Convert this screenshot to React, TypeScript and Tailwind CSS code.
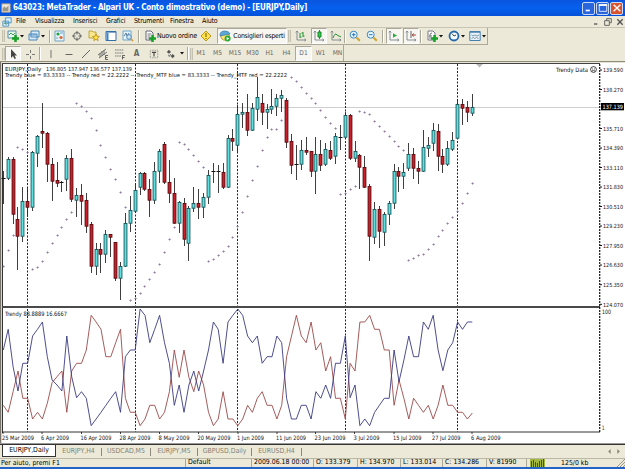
import React from "react";

type Candle = [number, number, number, number, string];

// high, body top, body bottom, low, direction (u = up, d = down, n = doji)
const candles: Candle[] = [
  [171, 178, 179, 204, "n"], [157, 159, 178, 180, "u"], [157, 159, 214, 224, "d"], [207, 219, 236, 270, "d"],
  [187, 201, 236, 242, "u"], [187, 201, 207, 217, "d"], [151, 152, 207, 211, "u"], [135, 136, 153, 167, "u"],
  [103, 131, 133, 148, "d"], [132, 133, 164, 182, "d"], [158, 164, 181, 201, "d"], [162, 180, 183, 187, "d"],
  [181, 182, 183, 192, "n"], [155, 158, 179, 191, "u"], [149, 158, 199, 202, "d"], [188, 195, 200, 217, "u"],
  [184, 195, 201, 225, "d"], [193, 200, 226, 233, "d"], [222, 224, 266, 273, "d"], [243, 249, 266, 275, "u"],
  [243, 249, 254, 273, "d"], [230, 234, 254, 263, "u"], [234, 234, 237, 257, "d"], [242, 242, 278, 281, "d"],
  [262, 266, 278, 300, "u"], [213, 223, 266, 267, "u"], [196, 210, 223, 232, "u"], [183, 190, 211, 212, "u"],
  [172, 173, 187, 195, "u"], [172, 173, 189, 191, "d"], [179, 189, 200, 217, "d"], [162, 171, 200, 204, "u"],
  [149, 151, 171, 183, "u"], [142, 144, 182, 184, "d"], [160, 182, 193, 203, "d"], [178, 193, 223, 224, "d"],
  [201, 202, 223, 233, "u"], [198, 203, 239, 246, "d"], [206, 208, 243, 261, "u"], [187, 203, 208, 212, "u"],
  [189, 203, 207, 219, "d"], [193, 197, 207, 218, "u"], [170, 175, 197, 204, "u"], [163, 171, 172, 183, "n"],
  [165, 171, 172, 193, "n"], [163, 172, 187, 189, "d"], [135, 138, 187, 188, "u"], [129, 138, 141, 151, "d"],
  [105, 114, 145, 153, "u"], [103, 112, 114, 128, "u"], [94, 112, 130, 136, "d"], [103, 108, 130, 131, "u"],
  [77, 97, 109, 121, "u"], [94, 103, 112, 125, "d"], [104, 109, 112, 129, "u"], [89, 106, 109, 114, "u"],
  [94, 98, 106, 116, "u"], [90, 95, 98, 112, "u"], [98, 100, 142, 148, "d"], [134, 141, 165, 174, "d"],
  [145, 164, 165, 180, "n"], [140, 150, 164, 170, "u"], [137, 150, 152, 155, "d"], [151, 151, 171, 177, "d"],
  [137, 154, 171, 194, "u"], [140, 154, 165, 171, "d"], [143, 149, 164, 166, "u"], [141, 150, 158, 160, "d"],
  [133, 136, 156, 164, "u"], [125, 137, 138, 150, "n"], [112, 115, 137, 139, "u"], [114, 115, 158, 160, "d"],
  [141, 151, 158, 162, "u"], [154, 155, 167, 189, "d"], [156, 167, 187, 188, "d"], [184, 186, 236, 261, "d"],
  [202, 209, 237, 244, "u"], [206, 209, 231, 248, "d"], [212, 214, 232, 246, "u"], [201, 203, 214, 225, "u"],
  [164, 171, 203, 209, "u"], [167, 171, 176, 192, "d"], [163, 172, 176, 189, "u"], [143, 154, 168, 171, "u"],
  [148, 154, 168, 179, "d"], [161, 168, 171, 184, "d"], [130, 147, 171, 172, "u"], [137, 145, 148, 157, "u"],
  [123, 130, 143, 151, "u"], [124, 131, 156, 171, "d"], [149, 156, 164, 173, "d"], [141, 148, 164, 166, "u"],
  [132, 140, 149, 151, "u"], [100, 104, 138, 139, "u"], [99, 104, 108, 125, "d"], [101, 107, 112, 122, "d"],
  [94, 107, 113, 116, "u"],
];

// Trend dot height for every bar; 0 leaves the bar without a dot
const dots = [
  266, 250, 235, 147, 149, 152, 269, 267, 261, 252, 243, 235, 227, 219, 212, 103, 106, 111, 118, 130, 145, 157, 169, 179,
  192, 207, 300, 298, 293, 286, 279, 272, 264, 252, 239, 227, 142, 144, 149, 155, 161, 167, 261, 259, 255, 251, 246, 237,
  226, 212, 196, 180, 166, 150, 137, 129, 129, 120, 0, 77, 81, 87, 93, 98, 103, 110, 117, 123, 128, 194, 193, 189, 186,
  111, 112, 114, 121, 126, 131, 136, 141, 146, 150, 260, 258, 255, 254, 249, 244, 236, 230, 223, 217, 211, 203, 193, 183,
];

// Oscillator readings in thirds of a pixel below y = 300
const blue = [
  150, 88, 200, 273, 190, 190, 108, 88, 66, 170, 240, 255, 273, 108, 230, 293, 275, 295, 377, 357, 337, 316, 295, 275, 337,
  170, 150, 150, 27, 46, 128, 88, 46, 128, 190, 316, 255, 337, 255, 213, 273, 213, 150, 66, 88, 190, 66, 46, 27, 46, 108,
  128, 108, 190, 170, 170, 108, 128, 295, 357, 357, 316, 316, 357, 275, 295, 255, 295, 190, 190, 108, 293, 255, 377, 357,
  377, 337, 316, 295, 295, 150, 245, 180, 108, 170, 170, 66, 88, 46, 150, 212, 150, 128, 66, 88, 66, 66,
];
const red = [
  316, 337, 275, 213, 295, 295, 357, 337, 357, 310, 248, 230, 213, 337, 213, 190, 190, 150, 46, 66, 88, 170, 170, 128, 88,
  295, 337, 337, 377, 357, 316, 316, 357, 337, 275, 150, 232, 150, 232, 275, 213, 255, 337, 377, 357, 275, 357, 357, 377,
  357, 316, 337, 295, 275, 316, 316, 357, 316, 170, 108, 46, 108, 128, 66, 150, 128, 213, 170, 295, 295, 357, 190, 213, 66,
  66, 46, 88, 88, 150, 150, 316, 240, 295, 357, 295, 316, 337, 316, 357, 316, 255, 316, 316, 337, 337, 357, 339,
];

const prices = [
  ["139.590", 70], ["138.270", 89.5], ["135.710", 128.5], ["134.390", 148], ["133.110", 167.5], ["131.830", 187],
  ["130.510", 206.5], ["129.230", 226], ["127.950", 245.5], ["126.630", 265], ["125.350", 284.7], ["124.070", 304.3],
] as const;

const dates: [string, number, number][] = [
  ["25 Mar 2009", 2, 32], ["6 Apr 2009", 41, 28], ["16 Apr 2009", 80.5, 31], ["28 Apr 2009", 119.5, 31],
  ["8 May 2009", 158.5, 31], ["20 May 2009", 197.5, 33], ["1 Jun 2009", 237, 27], ["11 Jun 2009", 276, 30],
  ["23 Jun 2009", 314.5, 31], ["3 Jul 2009", 353.5, 26], ["15 Jul 2009", 393, 28.5], ["27 Jul 2009", 432, 28.5],
  ["6 Aug 2009", 471, 29.5],
];

const barX = (i: number) => 3.3 + i * 4.885;
const points = (v: number[]) => v.map((y, i) => `${barX(i).toFixed(1)},${(300 + y / 3).toFixed(1)}`).join(" ");

function Label({ x, y, w, children, fill = "#111", size = 6 }: { x: number; y: number; w: number; children: string; fill?: string; size?: number }) {
  return (
    <text x={x} y={y} textLength={w} lengthAdjust="spacingAndGlyphs" fill={fill} fontSize={size}>
      {children}
    </text>
  );
}

function Chart() {
  return (
    <svg viewBox="0 61 625 383" className="block h-[383px] w-[625px] shrink-0" style={{ fontFamily: '"DejaVu Sans Condensed", "DejaVu Sans", sans-serif' }}>
      <rect x="0" y="61" width="625" height="383" fill="#fff" />
      <rect x="0" y="61" width="625" height="1" fill="#8f8c7c" />
      <rect x="0" y="62" width="625" height="1" fill="#e6e3d5" />
      <rect x="0" y="62" width="1" height="382" fill="#77756b" />
      <rect x="1" y="62" width="1" height="382" fill="#d8d5c8" />
      <rect x="2" y="63" width="1" height="370" fill="#333" />
      <rect x="2" y="63" width="598" height="1" fill="#444" />
      <path d="M3 107.5H600" stroke="#cfcfcf" />
      {[27.5, 135.5, 237.5, 345.5, 457.5].map((x) => (
        <path key={x} d={`M${x} 64V432`} stroke="#222" strokeDasharray="2 1.5" />
      ))}
      <path d="M476 64h7l-3.5 3.5z" fill="#bbb" />
      {dots.map((y, i) =>
        y ? (
          <path key={i} d={`M${Math.floor(barX(i)) - 0.6} ${y + 0.5}h2.4M${Math.floor(barX(i)) + 0.6} ${y - 0.7}v2.4`} stroke="#887398" strokeWidth="0.75" />
        ) : null
      )}
      {candles.map(([h, t, b, l, k], i) => {
        const c = Math.floor(barX(i)) + 0.5;
        return (
          <g key={i}>
            <path d={`M${c} ${h}V${l}`} stroke="#292929" strokeWidth={0.9} />
            {k === "n" ? (
              <path d={`M${c - 2} ${t + 0.5}h4`} stroke="#111" />
            ) : (
              <rect x={c - 1.45} y={t + 0.4} width="2.9" height={Math.max(b - t - 0.2, 1.4)} fill={k === "u" ? "#5de0e0" : "#c81f28"} stroke={k === "u" ? "#114f52" : "#54080c"} strokeWidth="0.85" />
            )}
          </g>
        );
      })}
      <rect x="2" y="306" width="598" height="2" fill="#4a4a4a" />
      <polyline points={points(red)} fill="none" stroke="#9c4a4a" strokeWidth="0.9" />
      <polyline points={points(blue)} fill="none" stroke="#3a3a82" strokeWidth="0.9" />
      <path d="M2 432H600" stroke="#333" />
      <path d="M599.7 64V432" stroke="#111" strokeWidth="1.2" strokeDasharray="2 1" />
      <Label x={5} y={70.8} w={36.5} size={5.4}>EURJPY,Daily</Label>
      <Label x={46} y={70.8} w={86} size={5.4}>136.805 137.947 136.577 137.139</Label>
      <Label x={5} y={77.3} w={282} size={5.4}>Trendy blue = 83.3333 -- Trendy red = 22.2222 -- Trendy_MTF blue = 83.3333 -- Trendy_MTF red = 22.2222</Label>
      <Label x={556} y={72} w={32}>Trendy Data</Label>
      <circle cx="593.5" cy="69.5" r="2.9" fill="none" stroke="#111" strokeWidth="0.8" />
      <path d="M592 69h1m1 0h1M592 71q1.5-1.2 3 0" fill="none" stroke="#111" strokeWidth="0.7" />
      <Label x={5} y={316} w={62}>Trendy 88.8889 16.6667</Label>
      {prices.map(([p, y]) => (
        <g key={p}>
          <path d={`M600 ${y}h2`} stroke="#111" />
          <Label x={603} y={y + 2.2} w={20} size={5.6}>{p}</Label>
        </g>
      ))}
      <rect x="601" y="103" width="23" height="7.3" fill="#000" />
      <Label x={602.5} y={108.9} w={20.5} fill="#fff" size={5.8}>137.139</Label>
      <Label x={602} y={314} w={9}>100</Label>
      <Label x={602} y={430} w={2.5}>1</Label>
      {dates.map(([d, x, w]) => (
        <g key={d}>
          <path d={`M${x + 1} 432v2`} stroke="#111" strokeWidth="0.8" />
          <Label x={x} y={439.5} w={w}>{d}</Label>
        </g>
      ))}
      <rect x="0" y="443" width="625" height="1" fill="#999" />
    </svg>
  );
}

function Icon({ children, className = "size-3" }: { children: React.ReactNode; className?: string }) {
  return (
    <svg viewBox="0 0 12 12" className={`${className} shrink-0`} fill="none" strokeWidth="1">
      {children}
    </svg>
  );
}

const Tri = () => (
  <span className="flex w-[5px] shrink-0 justify-center">
    <svg viewBox="0 0 4 3" className="h-[3px] w-[4px]"><path d="M0 0h4L2 2.5z" fill="#111" /></svg>
  </span>
);
const Sep = ({ className = "" }: { className?: string }) => (
  <span className={`h-[13px] w-[2px] shrink-0 border-r border-l border-r-white border-l-[#aca899] ${className}`} />
);
const Grip = () => <span className="block h-[12px] w-[3px] shrink-0 border-x border-[#c5c1b0] bg-[#dedbcd]" />;
const Slot = ({ className, children }: { className: string; children: React.ReactNode }) => (
  <span className={`flex h-full shrink-0 items-center justify-center ${className}`}>{children}</span>
);
const pressed = "border border-t-[#aca899] border-l-[#aca899] border-r-white border-b-white bg-[#f7f6f0]";
const Plus = () => <path d="M8.5 5v7M5 8.5h7" stroke="#17a129" strokeWidth="2.5" />;
const Axis = () => <path d="M2 1v9h9M.8 2.5 2 1l1.2 1.5M9.5 8.8 11 10l-1.5 1.2" stroke="#7b858d" strokeWidth=".9" />;

function Toolbar() {
  return (
    <div className="flex h-[17px] w-[488px] shrink-0 items-center border-r border-b border-[#aca899]">
      <span className="ml-[2px]"><Grip /></span>
      <Slot className="ml-[1px] w-[13px]"><Icon><path d="M1 1h8v7H1z" fill="#e9f6ef" stroke="#5590aa" /><path d="M2 5l2-2 2 2 2-2" stroke="#3d9c53" /><Plus /></Icon></Slot>
      <Tri />
      <Slot className="ml-[4px] w-[12px]"><Icon><path d="M3 1h8v6H3zM1 4h8v6H1z" fill="#d9ebfa" stroke="#4b86b6" /><path d="M2 5h6" stroke="#5b98cb" /></Icon></Slot>
      <Tri />
      <Sep className="ml-[4px]" />
      <Slot className="w-[17px]"><Icon><path d="M1 1h9v10H1z" fill="#e6f3fc" stroke="#6fa4cb" /><circle cx="4" cy="4" r="1.6" fill="#25a341" /><circle cx="7" cy="7.5" r="1.6" fill="#d56a35" /><path d="M6 3h3M2 8h2" stroke="#6fa4cb" /></Icon></Slot>
      <Slot className="w-[17px]"><Icon><circle cx="6" cy="6" r="3.5" stroke="#666" /><path d="M6 1v3.5M6 7.5V11M1 6h3.5M7.5 6H11" stroke="#666" /></Icon></Slot>
      <Slot className="w-[17px]"><Icon><path d="M1 3V1h3l1 1h3v6H1z" fill="#fae98c" stroke="#b59427" strokeWidth=".8" /><path d="m8 4 1 2.2 2.4.3-1.8 1.6.5 2.5L8 9.3l-2.2 1.3.5-2.5-1.8-1.6L7 6.2z" fill="#ffe348" stroke="#ba8a14" strokeWidth=".8" /></Icon></Slot>
      <Slot className="w-[17px]"><Icon><path d="M1 1.5h10v9H1z" fill="#fff" stroke="#356fa8" /><path d="M1 2h10" stroke="#356fa8" strokeWidth="1.2" /><path d="M2.5 3v7" stroke="#3f86ca" strokeWidth="2" /></Icon></Slot>
      <Slot className="w-[17px]"><Icon><path d="M1 1h8v9H1z" fill="#e6f3fc" stroke="#6fa4cb" /><path d="m2 6 2-3 1 3 2-3" stroke="#587994" /><circle cx="7" cy="7" r="2.3" fill="#cfe9fa" stroke="#5388b3" /><path d="m9 9 2 2" stroke="#d39b24" strokeWidth="1.6" /></Icon></Slot>
      <Sep className="ml-[2px]" />
      <Slot className="ml-[3px] w-[13px]"><Icon><path d="M2 1h5l2 2v7H2z" fill="#fff" stroke="#667" /><path d="M3.5 4h4M3.5 6h3M3.5 8h2" stroke="#777" /><Plus /></Icon></Slot>
      <span className="ml-[1px] w-[42px] shrink-0 text-[7px] tracking-[-0.17px]">Nuovo ordine</span>
      <Slot className="w-[14px]"><Icon><path d="m6 1 5 5-5 5-5-5z" fill="#ffe34d" stroke="#c5951a" strokeLinejoin="round" /><path d="M6 3v4M6 8v1" stroke="#6f550b" /></Icon></Slot>
      <Slot className={`ml-[4px] w-[70px] gap-[2px] ${pressed}`}>
        <Icon><circle cx="6" cy="6" r="4.2" fill="#ffe574" stroke="#bd9634" /><path d="M1 5q0-4 5-4 4 0 5 3L1 6z" fill="#5ba8d8" stroke="#367ca9" strokeWidth=".7" /><circle cx="8.6" cy="8.6" r="3" fill="#27aa36" /><path d="m7.7 7 2.6 1.6-2.6 1.6z" fill="#fff" /></Icon>
        <span className="text-[6.8px] tracking-[-0.2px]">Consiglieri esperti</span>
      </Slot>
      <span className="ml-[1px]"><Grip /></span>
      <Slot className="w-[20px]"><Icon><Axis /><path d="M5 3v5m0-1h1.5M8 2v5M6.5 3H8m0 3h1.5" stroke="#249535" /></Icon></Slot>
      <Slot className={`w-[16px] ${pressed}`}><Icon><Axis /><path d="M6.5 0v9" stroke="#249535" /><path d="M5 2h3v5H5z" fill="#2fd14a" stroke="#16822a" /></Icon></Slot>
      <Slot className="w-[17px]"><Icon><Axis /><path d="M3 8q2-6 4-3l4 2" stroke="#249535" /></Icon></Slot>
      <Sep />
      <Slot className="w-[17px]"><Icon><circle cx="4.7" cy="4.7" r="3.5" fill="#e5f6ff" stroke="#3e86bd" /><path d="M3 4.7h3.5M4.7 3v3.5" stroke="#2577b6" /><path d="m7.5 7.5 3.3 3.3" stroke="#d2a22c" strokeWidth="2" /></Icon></Slot>
      <Slot className="w-[17px]"><Icon><circle cx="4.7" cy="4.7" r="3.5" fill="#e5f6ff" stroke="#3e86bd" /><path d="M3 4.7h3.5" stroke="#2577b6" /><path d="m7.5 7.5 3.3 3.3" stroke="#d2a22c" strokeWidth="2" /></Icon></Slot>
      <Sep className="ml-[2px]" />
      <Slot className={`ml-[2px] w-[16px] ${pressed}`}><Icon><Axis /><path d="M5 3.2 9 5.5 5 7.8z" fill="#2caa3f" /></Icon></Slot>
      <Slot className={`ml-[1px] w-[16px] ${pressed}`}><Icon><Axis /><path d="M6 1v7" stroke="#596470" /><path d="M7 5h4M7 5l2-1.5M7 5l2 1.5" stroke="#a75143" /></Icon></Slot>
      <Sep className="ml-[1px]" />
      <Slot className="ml-[4px] w-[12px]"><Icon><path d="M2 1h5l2 2v7H2z" fill="#fff" stroke="#778" /><path d="M6 3q-2 0-2 2v4M3 6h3" stroke="#777" /><Plus /></Icon></Slot>
      <Tri />
      <Slot className="ml-[4px] w-[13px]"><Icon><circle cx="6" cy="6" r="4.5" fill="#f4fbff" stroke="#2768aa" strokeWidth="1.8" /><path d="M4 3.7 6 6l2-1" stroke="#444" /></Icon></Slot>
      <Tri />
      <Slot className="ml-[3px] w-[13px]"><Icon><path d="M.8 1.5h10.4v9H.8z" fill="#e6f3fc" stroke="#4780af" /><path d="M1 2h10" stroke="#4780af" strokeWidth="1.5" /><path d="m2.5 5 1.5 1 2-1 2 1 2-1M2.5 8.5l2-1 1 1 2-1 2 1" stroke="#687d89" strokeWidth=".8" /></Icon></Slot>
      <Tri />
    </div>
  );
}

function DrawingBar() {
  return (
    <div className="flex h-[16px] w-[344px] shrink-0 items-center border-r border-[#aca899] pt-px text-[6.6px] text-[#666]">
      <span className="ml-[2px]"><Grip /></span>
      <Slot className={`w-[16px] ${pressed}`}><Icon><path d="M4 1v9l2-2 1.5 3L9 10.3 7.5 7.5H10z" fill="#444" /></Icon></Slot>
      <Slot className="w-[18px]"><Icon><path d="M6.5 2v3M6.5 8v3M2 6.5h3M8 6.5h3" stroke="#777" /></Icon></Slot>
      <Sep />
      <Slot className="w-[19px]"><Icon><path d="M6 2v8" stroke="#777" /></Icon></Slot>
      <Slot className="w-[17px]"><Icon><path d="M2.5 6.5h7" stroke="#666" /></Icon></Slot>
      <Slot className="w-[17px]"><Icon><path d="m2 10 8-8" stroke="#666" /></Icon></Slot>
      <Slot className="w-[17px]"><Icon><path d="m1 7 8-6M2 10l8-6M3 5v4M5 3v5M7 2v5" stroke="#666" strokeWidth=".9" /><path d="M11 7.5H8.5v4H11M8.5 9.5h2" stroke="#444" strokeWidth=".8" /></Icon></Slot>
      <Slot className="w-[17px]"><Icon><path d="M1 2h9M1 5h9M1 8h6" stroke="#777" strokeDasharray="1.5 .7" /><path d="M8.5 11.5v-4H11M8.5 9.5h2" stroke="#444" strokeWidth=".8" /></Icon></Slot>
      <Slot className="w-[17px] text-[8px] font-bold">A</Slot>
      <Slot className="w-[18px]"><Icon className="size-[10px]"><path d="M1.5 1.5h9v9h-9z" stroke="#777" strokeDasharray="1 1" /><path d="M3.5 4h5M6 4v5" stroke="#444" strokeWidth="1.3" /></Icon></Slot>
      <Slot className="w-[16px]"><Icon className="size-[10px]"><path d="m3.5 1 2.5 2.7-2.5 2-2.5-2z" fill="#555" /><path d="m8 6 2.5 2.3L8 11 5.5 8.3z" fill="#555" /><path d="m3 7 1 2 1.5-3" stroke="#555" /></Icon></Slot>
      <Tri />
      <Sep className="ml-[3px]" />
      <span className="ml-[1px]"><Grip /></span>
      <Slot className="w-[16px]">M1</Slot>
      <Slot className="w-[17px]">M5</Slot>
      <Slot className="w-[18px]">M15</Slot>
      <Slot className="w-[17px]">M30</Slot>
      <Slot className="w-[17px]">H1</Slot>
      <Slot className="w-[17px]">H4</Slot>
      <Slot className={`w-[17px] ${pressed}`}>D1</Slot>
      <Slot className="w-[17px]">W1</Slot>
      <Slot className="w-[17px]">MN</Slot>
    </div>
  );
}

const tabs: [string, string][] = [
  ["EURJPY,H4", "w-[46px]"], ["USDCAD,M5", "w-[49px]"], ["EURJPY,M5", "w-[47px]"], ["GBPUSD,Daily", "w-[54px]"], ["EURUSD,H4", "w-[50px]"],
];

const status: [string, string][] = [
  ["Default", "w-[66px]"], ["2009.06.18 00:00", "w-[62px]"], ["O: 133.379", "w-[44px]"], ["H: 134.970", "w-[43px]"],
  ["L: 133.014", "w-[42px]"], ["C: 134.286", "w-[44px]"], ["V: 81990", "w-[40px]"],
];

const winButton = "flex h-[13px] w-[13px] items-center justify-center rounded-[2px] border border-[#cbd9f5]";

export default function App() {
  return (
    <div className="flex h-[469px] w-[625px] flex-col overflow-hidden bg-[#ece9d8] font-['DejaVu_Sans_Condensed','DejaVu_Sans',sans-serif] leading-none whitespace-nowrap text-black">
      <header className="flex h-[16px] shrink-0 items-center bg-linear-to-b from-[#0b55df] via-[#0560ee] to-[#0451d8] pr-[2px] pl-[1px] text-white">
        <Icon className="size-[10px]"><path d="M1 1h10v10H1z" fill="#eee9d8" stroke="#bb9c83" /><path d="M2 7l2-3 2 2 3-3v7H2z" fill="#98958a" /></Icon>
        <h1 className="ml-[2px] text-[8px] font-bold tracking-[-0.23px]">643023: MetaTrader - Alpari UK - Conto dimostrativo (demo) - [EURJPY,Daily]</h1>
        <div className="ml-auto flex gap-[1px]">
          <span className={`${winButton} bg-[#2b65db]`}><Icon className="size-[10px]"><path d="M2 9h5" stroke="#fff" strokeWidth="2" /></Icon></span>
          <span className={`${winButton} bg-[#2b65db]`}><Icon className="size-[10px]"><path d="M1.5 2h9v8h-9z" stroke="#fff" /><path d="M1 2.5h10" stroke="#fff" strokeWidth="2" /></Icon></span>
          <span className={`${winButton} bg-[#d9532f]`}><Icon className="size-[10px]"><path d="m2 2 8 8M10 2l-8 8" stroke="#fff" strokeWidth="1.7" /></Icon></span>
        </div>
      </header>
      <nav className="flex h-[12px] shrink-0 items-center border-b border-[#c9c5b5] text-[7px] tracking-[-0.17px]">
        <Icon className="ml-[2px] size-[10px]"><path d="M4 1h7v6H4zM1 5h7v6H1z" fill="#d9f0ff" stroke="#4389bb" /><path d="m2 8 2-1 1 2 2-2" stroke="#348050" /></Icon>
        <span className="ml-[4px] w-[19px]">File</span>
        <span className="w-[38px]">Visualizza</span>
        <span className="w-[33px]">Inserisci</span>
        <span className="w-[28px]">Grafici</span>
        <span className="w-[36px]">Strumenti</span>
        <span className="w-[32px]">Finestra</span>
        <span>Aiuto</span>
        <Icon className="ml-auto size-[8px]"><path d="M3 9h5" stroke="#555" strokeWidth="2" /></Icon>
        <Icon className="ml-[4px] size-[8px]"><path d="M4 4V1h7v6H8M1 4h7v7H1z" stroke="#555" strokeWidth="1.3" /></Icon>
        <Icon className="mr-[1px] ml-[4px] size-[8px]"><path d="m2 2 8 8M10 2l-8 8" stroke="#555" strokeWidth="2" /></Icon>
      </nav>
      <Toolbar />
      <DrawingBar />
      <Chart />
      <div className="flex h-[14px] shrink-0 items-center border-t border-[#333] text-[6.9px] text-[#85816f]">
        <span className="ml-[2px] flex h-[12px] w-[54px] items-center justify-center self-start border-r border-b border-l border-[#333] bg-white text-black">EURJPY,Daily</span>
        {tabs.map(([name, width]) => (
          <span key={name} className={`flex h-[8px] shrink-0 items-center justify-center border-r border-[#8d8a7d] ${width}`}>{name}</span>
        ))}
        <svg viewBox="0 0 14 6" className="mr-[4px] ml-auto h-[5px] w-[14px]" fill="#8a8778"><path d="M3 0v6L0 3zM11 0v6l3-3z" /></svg>
      </div>
      <footer className="flex h-[11px] flex-1 items-center border-t border-[#bcb8a8] border-b-2 border-b-[#2464c9] text-[6.9px]">
        <span className="w-[185px] shrink-0 pl-px">Per aiuto, premi F1</span>
        {status.map(([text, width]) => (
          <span key={text} className={`h-[8px] shrink-0 border-l border-[#aca899] pl-[2px] ${width}`}>{text}</span>
        ))}
        <span className="flex h-[8px] flex-1 items-center border-l border-[#aca899] pl-[3px]">
          <svg viewBox="0 0 15 8" className="h-[8px] w-[15px]"><path d="M0 0h15v8H0z" fill="#a2b83e" /><path d="M1.5 2v6M3.5 1v7M5.5 3v5M7.5 4v4M9.5 2v6M11.5 1v7M13.5 0v8" stroke="#25632b" /></svg>
          <span className="ml-[16px]">125/0 kb</span>
          <svg viewBox="0 0 8 8" className="ml-auto size-[8px]" stroke="#9b988a"><path d="m0 8 8-8M3 8l5-5M6 8l2-2" /></svg>
        </span>
      </footer>
    </div>
  );
}
